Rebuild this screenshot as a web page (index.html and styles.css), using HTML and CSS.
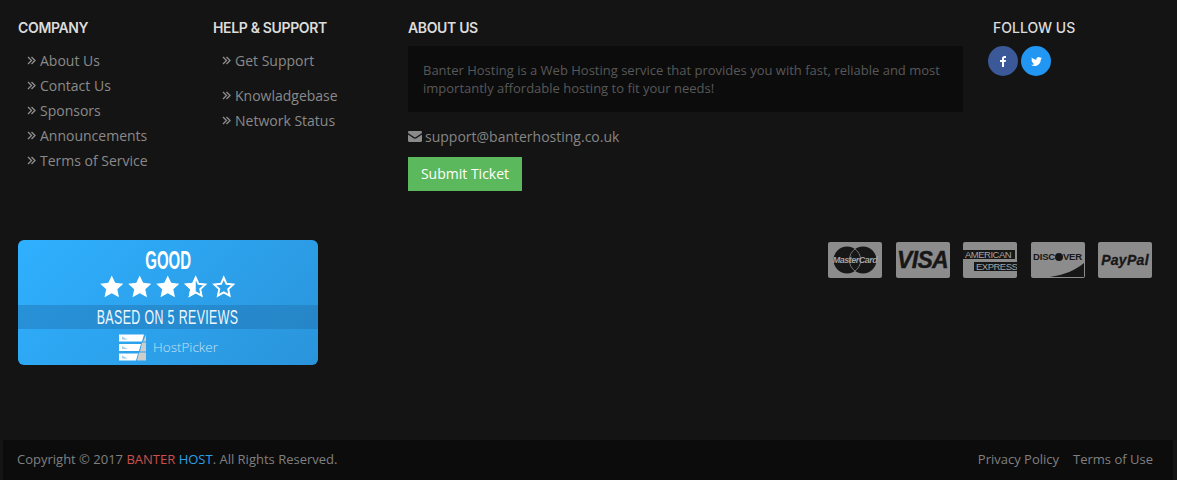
FILE: index.html
```html
<!DOCTYPE html>
<html lang="en">
<head>
<meta charset="utf-8">
<title>Banter Hosting footer</title>
<link rel="stylesheet" href="styles.css">
</head>
<body>
<svg class="defs" width="0" height="0" aria-hidden="true">
  <defs>
    <symbol id="chev" viewBox="0 0 9 9"><path d="M1 1l3.500 3.500L1 8M4.500 1L8 4.500 4.500 8" fill="none" stroke="currentColor" stroke-width="1.300"/></symbol>
    <symbol id="star" viewBox="0 0 24 24"><path d="M12 .5l3.500 7.500 8.300 1-6.100 5.600 1.700 8.200L12 18.700 4.600 22.800l1.700-8.200L.2 9l8.300-1z" fill="#fff"/></symbol>
    <symbol id="star-half" viewBox="0 0 24 24"><path d="M12 2.800l2.800 6.200 6.800.8-5 4.600 1.300 6.700L12 17.700 6.100 21.100l1.300-6.700-5-4.600 6.800-.8z" fill="none" stroke="#fff" stroke-width="2"/><path d="M12 .5v18.200L4.600 22.800l1.700-8.200L.2 9l8.300-1z" fill="#fff"/></symbol>
    <symbol id="star-empty" viewBox="0 0 24 24"><path d="M12 2.800l2.800 6.200 6.800.8-5 4.600 1.300 6.700L12 17.700 6.100 21.100l1.300-6.700-5-4.600 6.800-.8z" fill="none" stroke="#fff" stroke-width="2"/></symbol>
  </defs>
</svg>
<footer class="footer">
  <div class="columns">
    <section class="col col-company">
      <h4 class="heading">COMPANY</h4>
      <ul class="links">
        <li><svg class="chev"><use href="#chev"/></svg>About Us</li>
        <li><svg class="chev"><use href="#chev"/></svg>Contact Us</li>
        <li><svg class="chev"><use href="#chev"/></svg>Sponsors</li>
        <li><svg class="chev"><use href="#chev"/></svg>Announcements</li>
        <li><svg class="chev"><use href="#chev"/></svg>Terms of Service</li>
      </ul>
    </section>
    <section class="col col-help">
      <h4 class="heading">HELP &amp; SUPPORT</h4>
      <ul class="links">
        <li class="spaced"><svg class="chev"><use href="#chev"/></svg>Get Support</li>
        <li><svg class="chev"><use href="#chev"/></svg>Knowladgebase</li>
        <li><svg class="chev"><use href="#chev"/></svg>Network Status</li>
      </ul>
    </section>
    <section class="col col-about">
      <h4 class="heading about-heading">ABOUT US</h4>
      <p class="about-box">Banter Hosting is a Web Hosting service that provides you with fast, reliable and most importantly affordable hosting to fit your needs!</p>
      <p class="email"><svg class="mail" viewBox="0 0 14 11"><path d="M0 1.200C0 .5.500 0 1.200 0h11.600C13.500 0 14 .5 14 1.200c0 .5-.3.9-.7 1.200L8 6.100c-.6.400-1.400.400-2 0L.7 2.400C.3 2.100 0 1.700 0 1.200zM0 3.500l5.500 3.700c.9.600 2.100.6 3 0L14 3.500v6.300c0 .7-.5 1.200-1.200 1.200H1.200C.5 11 0 10.500 0 9.800z" fill="currentColor"/></svg>support@banterhosting.co.uk</p>
      <a class="ticket">Submit Ticket</a>
    </section>
    <section class="col col-follow">
      <h4 class="heading follow-heading">FOLLOW US</h4>
      <div class="social">
        <span class="circle fb"><svg width="6" height="11" viewBox="0 0 6 11"><path d="M4 11V6h1.700L6 4H4V2.800c0-.6.200-.9.900-.9H6V.1C5.800.1 5.200 0 4.500 0 3 0 2 .9 2 2.600V4H0v2h2v5z" fill="#fff"/></svg></span>
        <span class="circle tw"><svg width="11" height="9" viewBox="0 0 24 20"><path d="M24 2.400c-.9.400-1.800.7-2.800.8 1-.6 1.800-1.600 2.200-2.700-1 .6-2 1-3.100 1.200C19.300.7 18 0 16.600 0c-2.700 0-4.900 2.200-4.900 4.900 0 .4 0 .8.100 1.100C7.700 5.800 4.100 3.900 1.700.9 1.200 1.600 1 2.500 1 3.400c0 1.700.9 3.200 2.200 4.100-.8 0-1.600-.2-2.200-.6v.1c0 2.400 1.700 4.400 3.900 4.800-.4.100-.8.200-1.300.2-.3 0-.6 0-.9-.1.600 2 2.400 3.400 4.600 3.400-1.700 1.300-3.800 2.100-6.100 2.100-.4 0-.8 0-1.200-.1C2.200 19.200 4.800 20 7.500 20c9.100 0 14-7.500 14-14v-.6c1-.7 1.800-1.600 2.500-3z" fill="#fff"/></svg></span>
      </div>
    </section>
  </div>
  <div class="middle">
    <div class="badge">
      <div class="badge-title"><span class="squeeze-title">GOOD</span></div>
      <div class="stars">
        <svg class="star"><use href="#star"/></svg>
        <svg class="star"><use href="#star"/></svg>
        <svg class="star"><use href="#star"/></svg>
        <svg class="star"><use href="#star-half"/></svg>
        <svg class="star"><use href="#star-empty"/></svg>
      </div>
      <div class="badge-band"><span class="squeeze-band">BASED ON 5 REVIEWS</span></div>
      <div class="badge-brand">
        <svg class="hp-logo" viewBox="0 0 27 26">
          <path d="M0 0h25l-2 7H0zM0 9.500h22l-2 7H0zM0 19h19l-2 7H0z" fill="#fff"/>
          <path d="M27 0v7h-3zM27 8v9h-6l2-9zM27 18v8h-9l2-8z" fill="#cdcdcd"/>
          <path d="M3 2v3h6zM3 11.500v3h6zM3 21v3h6z" fill="#9fd0ef"/>
        </svg>
        <span class="hp-name">HostPicker</span>
      </div>
    </div>
    <div class="cards">
      <div class="card">
        <svg class="mc" viewBox="0 0 44 28"><circle cx="14" cy="14" r="13.500" fill="#171717"/><circle cx="30" cy="14" r="13.500" fill="#171717"/><path d="M22 3a13.500 13.500 0 0 1 0 22 13.500 13.500 0 0 1 0-22z" fill="#171717" stroke="#8c8c8c" stroke-width=".8"/></svg>
        <span class="mc-text">MasterCard</span>
      </div>
      <div class="card"><span class="visa">VISA</span></div>
      <div class="card amex"><span class="amex-1">AMERICAN</span><span class="amex-2">EXPRESS</span></div>
      <div class="card discover"><span class="disc-text">DISC<i class="disc-dot"></i>VER</span><svg class="disc-wedge" viewBox="0 0 34 14"><path d="M0 14C14 12 26 7 34 0v14z" fill="#171717"/></svg></div>
      <div class="card"><span class="paypal">PayPal</span></div>
    </div>
  </div>
  <div class="copybar">
    <span>Copyright © 2017 <span class="red">BANTER</span> <span class="blue">HOST</span>. All Rights Reserved.</span>
    <span class="legal"><span>Privacy Policy</span><span>Terms of Use</span></span>
  </div>
</footer>
</body>
</html>
```
FILE: styles.css
```css
* { box-sizing: border-box; }
html, body { margin: 0; height: 480px; overflow: hidden; }
body {
  background: #141414;
  color: #8a8a8a;
  font-family: "Open Sans", sans-serif;
  font-size: 14px;
}
.defs { display: block; height: 0; }
.footer { height: 480px; display: flex; flex-direction: column; }
.columns { display: flex; height: 240px; padding: 18px 0 0 18px; flex: none; }
.col { flex: none; }
.col-company, .col-help { width: 195px; }
.col-about { width: 555px; margin-right: 25px; }
.col-follow { width: 180px; }
.heading {
  margin: 0 0 10px;
  font-family: "Inter", sans-serif;
  font-size: 14px;
  line-height: 19px;
  font-weight: 600;
  letter-spacing: -.35px;
  color: #dcdcdc;
}
.about-heading { margin-bottom: 9px; }
.follow-heading { padding-left: 5px; font-weight: 500; letter-spacing: 0; }
.links { list-style: none; margin: 0; padding: 1px 0 0 9px; }
.links li { height: 25px; line-height: 25px; display: flex; align-items: center; white-space: nowrap; }
.links .spaced { margin-bottom: 10px; }
.chev { width: 9px; height: 9px; margin-right: 4px; color: #8f8f8f; }
.about-box {
  margin: 0;
  width: 555px;
  height: 66px;
  padding: 15px;
  background: #0c0c0c;
  color: #585858;
  font-size: 13px;
  line-height: 18px;
}
.email { display: flex; align-items: center; margin: 13px 0 0; height: 22px; white-space: nowrap; color: #868686; }
.mail { width: 14px; height: 11px; margin-right: 3px; color: #8a8a8a; }
.ticket {
  display: block;
  width: 114px;
  height: 34px;
  margin-top: 10px;
  background: #5cb85c;
  color: #fff;
  font-size: 14px;
  font-weight: 400;
  line-height: 34px;
  text-align: center;
}
.social { display: flex; gap: 3px; margin-top: -1px; }
.circle { width: 30px; height: 30px; border-radius: 50%; display: flex; align-items: center; justify-content: center; }
.fb { background: #3b5998; }
.tw { background: #2196f3; }
.middle { flex: none; height: 200px; display: flex; justify-content: space-between; align-items: flex-start; padding: 0 25px 0 18px; }
.badge {
  width: 300px;
  height: 125px;
  border-radius: 6px;
  overflow: hidden;
  background: linear-gradient(135deg, #2fb0ff 0%, #2a94da 100%);
  color: #fff;
  text-align: center;
  font-family: "Liberation Sans", sans-serif;
}
.badge-title { height: 32px; padding-top: 7px; font-size: 25px; line-height: 27px; font-weight: 700; }
.squeeze-title { display: inline-block; transform: scaleX(.6); }
.stars { height: 23px; display: flex; justify-content: center; gap: 4.500px; padding-top: 3px; }
.star { width: 23.500px; height: 23.500px; }
.badge-band { height: 24px; margin-top: 10px; background: rgba(30, 110, 170, .42); font-size: 19.500px; line-height: 24px; letter-spacing: .6px; color: #eef7ff; white-space: nowrap; }
.squeeze-band { display: inline-block; transform: scaleX(.635); }
.badge-brand { display: flex; align-items: center; justify-content: center; height: 36px; gap: 7px; padding-left: 1px; }
.hp-logo { width: 27px; height: 27px; }
.hp-name { font-family: "Open Sans", sans-serif; font-weight: 300; font-size: 13.500px; color: #c5e3f7; }
.cards { display: flex; gap: 13.500px; padding-top: 2px; }
.card {
  position: relative;
  width: 54px;
  height: 36px;
  border-radius: 2px;
  background: #8c8c8c;
  color: #171717;
  display: flex;
  align-items: center;
  justify-content: center;
  overflow: hidden;
}
.mc { width: 44px; height: 28px; }
.mc-text {
  position: absolute;
  left: 0;
  right: 0;
  top: 11px;
  text-align: center;
  font-family: "Liberation Sans", sans-serif;
  font-size: 9px;
  line-height: 14px;
  font-weight: 700;
  font-style: italic;
  letter-spacing: -.5px;
  color: #a4a4a4;
}
.visa { font-family: "Liberation Sans", sans-serif; font-size: 23px; font-weight: 700; font-style: italic; letter-spacing: -.7px; -webkit-text-stroke: .4px #171717; }
.amex { flex-direction: column; align-items: stretch; justify-content: center; font-family: "Liberation Sans", sans-serif; font-size: 9.500px; line-height: 9px; letter-spacing: -.5px; gap: 3px; white-space: nowrap; }
.amex-1 { background: #171717; color: #a4a4a4; width: 52px; padding-left: 2px; }
.amex-2 { background: #171717; color: #a4a4a4; width: 43px; margin-left: 11px; padding-left: 2px; }
.discover { flex-direction: column; justify-content: flex-start; font-family: "Liberation Sans", sans-serif; }
.disc-text { margin-top: 9px; font-size: 9.500px; line-height: 11px; font-weight: 700; letter-spacing: -.2px; display: flex; align-items: center; }
.disc-dot { display: block; width: 8px; height: 8px; border-radius: 50%; background: #171717; }
.disc-wedge { position: absolute; right: 1px; bottom: 1px; width: 34px; height: 14px; }
.paypal { font-family: "Liberation Sans", sans-serif; font-size: 14px; font-weight: 700; font-style: italic; letter-spacing: .3px; -webkit-text-stroke: .3px #171717; }
.copybar {
  flex: 1;
  margin: 0 4px 0 3px;
  padding: 0 20px 2px 14px;
  background: #0c0c0c;
  display: flex;
  align-items: center;
  justify-content: space-between;
  font-size: 13px;
  color: #808080;
}
.red { color: #c9504c; }
.blue { color: #2d9fe6; }
.legal { display: flex; gap: 14px; }
```
